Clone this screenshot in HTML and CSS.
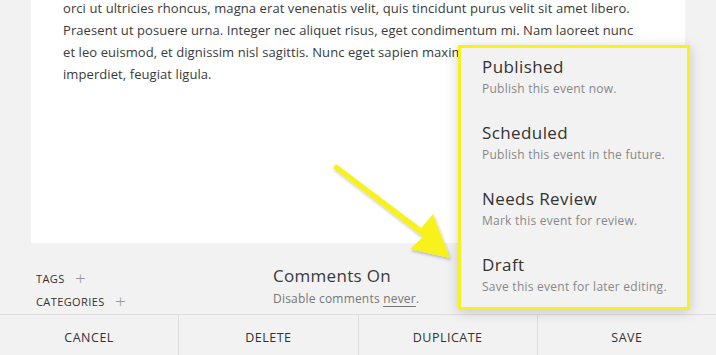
FILE: index.html
```html
<!DOCTYPE html>
<html lang="en">
<head>
    <meta charset="UTF-8">
    <meta name="viewport" content="width=device-width, initial-scale=1.0">
    <title>Edit Event</title>
    <link rel="stylesheet" href="styles.css">
</head>
<body>

<div class="editor">
    <p class="body-text">
        <span>orci ut ultricies rhoncus, magna erat venenatis velit, quis tincidunt purus velit sit amet libero.</span>
        <span>Praesent ut posuere urna. Integer nec aliquet risus, eget condimentum mi. Nam laoreet nunc</span>
        <span>et leo euismod, et dignissim nisl sagittis. Nunc eget sapien maximus,</span>
        <span>imperdiet, feugiat ligula.</span>
    </p>
</div>

<div class="meta">
    <div class="taxonomy">
        <div class="tax-row">TAGS <span class="plus">+</span></div>
        <div class="tax-row">CATEGORIES <span class="plus">+</span></div>
    </div>
    <div class="comments">
        <div class="comments-title">Comments On</div>
        <div class="comments-note">Disable comments <span class="link">never</span>.</div>
    </div>
</div>

<div class="actions">
    <button>CANCEL</button>
    <button>DELETE</button>
    <button>DUPLICATE</button>
    <button>SAVE</button>
</div>

<svg class="arrow" width="130" height="100" viewBox="0 0 130 100">
    <defs>
        <filter id="shade" x="-20%" y="-20%" width="140%" height="140%">
            <feDropShadow dx="1" dy="2" stdDeviation="1.5" flood-color="#000" flood-opacity="0.25"/>
        </filter>
    </defs>
    <polygon filter="url(#shade)" fill="#f8f21c"
             points="3,6 6,2 91,66 103,52 120,96 80,87 93,75"/>
</svg>

<ul class="status-menu">
    <li>
        <div class="status-title">Published</div>
        <div class="status-note">Publish this event now.</div>
    </li>
    <li>
        <div class="status-title">Scheduled</div>
        <div class="status-note">Publish this event in the future.</div>
    </li>
    <li>
        <div class="status-title">Needs Review</div>
        <div class="status-note">Mark this event for review.</div>
    </li>
    <li>
        <div class="status-title">Draft</div>
        <div class="status-note">Save this event for later editing.</div>
    </li>
</ul>

</body>
</html>
```

FILE: styles.css
```css
body {
    margin: 0;
    height: 355px;
    overflow: hidden;
    background-color: #f2f2f2;
    font-family: "Open Sans", "Noto Sans", sans-serif;
    color: #3a3a3a;
    position: relative;
}
.editor {
    background-color: #fff;
    margin: 0 31px;
    height: 243px;
    padding: 0 32px;
    box-sizing: border-box;
    overflow: hidden;
}
.body-text {
    margin: -3px 0 0;
    font-size: 13px;
    line-height: 22px;
    letter-spacing: 0.08px;
}
.body-text span {
    display: block;
    white-space: nowrap;
}
.meta {
    display: flex;
    height: 71px;
    box-sizing: border-box;
    padding-top: 24px;
}
.taxonomy {
    width: 237px;
    padding-left: 36px;
}
.tax-row {
    font-size: 11px;
    letter-spacing: 0.4px;
    line-height: 23px;
    color: #333;
}
.plus {
    color: #999;
    font-size: 19px;
    font-weight: 300;
    margin-left: 7px;
    vertical-align: -2px;
    line-height: 10px;
}
.comments-title {
    font-size: 17px;
    line-height: 20px;
    letter-spacing: 0.3px;
    margin-top: -1px;
}
.comments-note {
    font-size: 12px;
    letter-spacing: 0.2px;
    color: #777;
    margin-top: 4px;
}
.link {
    text-decoration: underline;
    text-underline-offset: 3px;
}
.actions {
    display: flex;
    border-top: 1px solid #ddd;
    height: 41px;
}
.actions button {
    flex: 1;
    background: #f2f2f2;
    border: none;
    border-left: 1px solid #ddd;
    font-family: inherit;
    font-size: 12.5px;
    letter-spacing: 0.5px;
    color: #333;
    padding: 3px 0 0;
}
.actions button:first-child {
    border-left: none;
}
.arrow {
    position: absolute;
    left: 330px;
    top: 162px;
}
.status-menu {
    position: absolute;
    left: 458px;
    top: 45px;
    width: 232px;
    height: 265px;
    box-sizing: border-box;
    margin: 0;
    padding: 8px 0 0 21px;
    list-style: none;
    background-color: #f2f2f2;
    border: 3px solid #f8f21c;
    box-shadow: 0 2px 12px rgba(0, 0, 0, 0.18);
}
.status-menu li {
    height: 66px;
}
.status-title {
    font-size: 17px;
    line-height: 22px;
    letter-spacing: 0.4px;
    color: #333;
}
.status-note {
    font-size: 12px;
    letter-spacing: 0.25px;
    color: #888;
    margin-top: 2px;
}
```
